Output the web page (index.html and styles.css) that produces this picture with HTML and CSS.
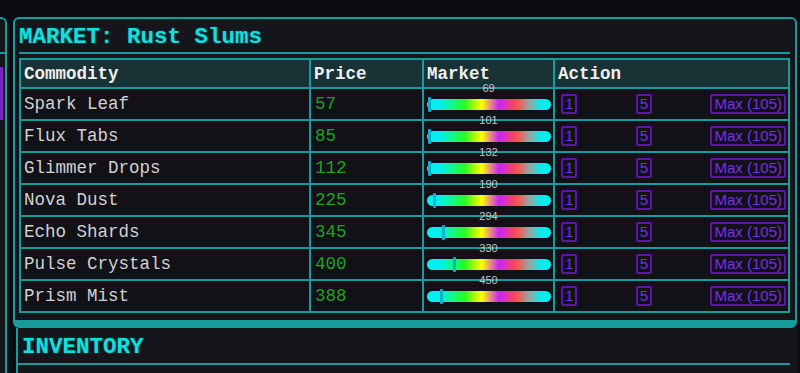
FILE: index.html
```html
<!DOCTYPE html>
<html lang="en">
<head>
  <meta charset="UTF-8" />
  <meta name="viewport" content="width=device-width, initial-scale=1.0" />
  <title>Market: Rust Slums</title>
  <link rel="stylesheet" href="styles.css">
</head>
<body>

  <div class="layout">
    <aside class="sidebar">
      <div class="side-head"></div>
      <div class="side-btn"></div>
    </aside>

    <main class="main">
      <section class="panel market">
        <h2 class="panel-title">MARKET: Rust Slums</h2>

        <table class="market-table">
          <colgroup>
            <col class="c-name">
            <col class="c-price">
            <col class="c-market">
            <col class="c-action">
          </colgroup>
          <thead>
            <tr>
              <th>Commodity</th>
              <th>Price</th>
              <th>Market</th>
              <th>Action</th>
            </tr>
          </thead>
          <tbody>
            <tr>
              <td>Spark Leaf</td>
              <td class="price">57</td>
              <td class="gauge-cell">
                <span class="gauge-val">69</span>
                <div class="gauge"><span class="thumb" style="left:1px"></span></div>
              </td>
              <td class="action-cell">
                <div class="actions"><button class="act">1</button><button class="act">5</button><button class="act">Max (105)</button></div>
              </td>
            </tr>
            <tr>
              <td>Flux Tabs</td>
              <td class="price">85</td>
              <td class="gauge-cell">
                <span class="gauge-val">101</span>
                <div class="gauge"><span class="thumb" style="left:1px"></span></div>
              </td>
              <td class="action-cell">
                <div class="actions"><button class="act">1</button><button class="act">5</button><button class="act">Max (105)</button></div>
              </td>
            </tr>
            <tr>
              <td>Glimmer Drops</td>
              <td class="price">112</td>
              <td class="gauge-cell">
                <span class="gauge-val">132</span>
                <div class="gauge"><span class="thumb" style="left:1px"></span></div>
              </td>
              <td class="action-cell">
                <div class="actions"><button class="act">1</button><button class="act">5</button><button class="act">Max (105)</button></div>
              </td>
            </tr>
            <tr>
              <td>Nova Dust</td>
              <td class="price">225</td>
              <td class="gauge-cell">
                <span class="gauge-val">190</span>
                <div class="gauge"><span class="thumb" style="left:6px"></span></div>
              </td>
              <td class="action-cell">
                <div class="actions"><button class="act">1</button><button class="act">5</button><button class="act">Max (105)</button></div>
              </td>
            </tr>
            <tr>
              <td>Echo Shards</td>
              <td class="price">345</td>
              <td class="gauge-cell">
                <span class="gauge-val">294</span>
                <div class="gauge"><span class="thumb" style="left:15px"></span></div>
              </td>
              <td class="action-cell">
                <div class="actions"><button class="act">1</button><button class="act">5</button><button class="act">Max (105)</button></div>
              </td>
            </tr>
            <tr>
              <td>Pulse Crystals</td>
              <td class="price">400</td>
              <td class="gauge-cell">
                <span class="gauge-val">330</span>
                <div class="gauge"><span class="thumb" style="left:26px"></span></div>
              </td>
              <td class="action-cell">
                <div class="actions"><button class="act">1</button><button class="act">5</button><button class="act">Max (105)</button></div>
              </td>
            </tr>
            <tr>
              <td>Prism Mist</td>
              <td class="price">388</td>
              <td class="gauge-cell">
                <span class="gauge-val">450</span>
                <div class="gauge"><span class="thumb" style="left:13px"></span></div>
              </td>
              <td class="action-cell">
                <div class="actions"><button class="act">1</button><button class="act">5</button><button class="act">Max (105)</button></div>
              </td>
            </tr>
          </tbody>
        </table>
      </section>

      <section class="panel inventory">
        <h2 class="panel-title">INVENTORY</h2>
      </section>
    </main>
  </div>

</body>
</html>
```

FILE: styles.css
```css
body {
  margin: 0;
  height: 373px;
  overflow: hidden;
  background-color: #0c0c10;
  font-family: "Liberation Mono", "Courier New", monospace;
  color: #d2d2d2;
}

.layout {
  display: flex;
  padding-top: 17px;
}

/* left rail, only its edge is in view */
.sidebar {
  flex: none;
  width: 5px;
  border-top: 2px solid #169c9c;
  border-right: 2px solid #169c9c;
  border-top-right-radius: 6px;
  background-color: #15151c;
}

.side-head {
  height: 33px;
  border-bottom: 2px solid #169c9c;
}

.side-btn {
  margin-top: 13px;
  width: 3px;
  height: 53px;
  background-color: #7a22c4;
}

.main {
  flex: 1;
  padding: 0 3px 0 6px;
}

.panel {
  background-color: #15151c;
}

.market {
  border: 2px solid #169c9c;
  border-bottom-width: 8px;
  border-radius: 6px;
  padding: 6px 5px 7px 4px;
}

.panel-title {
  margin: 0;
  padding-bottom: 2px;
  border-bottom: 2px solid #169c9c;
  font-size: 22.5px;
  line-height: 25px;
  font-weight: bold;
  color: #12dede;
  text-shadow: 0 0 2px rgba(0, 230, 230, 0.45);
}

.inventory {
  margin-left: 3px;
  border-left: 2px solid #169c9c;
  padding: 7px 7px 0 0;
  height: 38px;
}

.inventory .panel-title {
  padding-left: 4px;
  padding-bottom: 3px;
}

/* market table */
.market-table {
  width: 771px;
  margin-top: 4px;
  border: 2px solid #169c9c;
  border-collapse: separate;
  border-spacing: 0;
  table-layout: fixed;
  background-color: #111117;
  font-size: 17.5px;
}

.c-name { width: 290px; }
.c-price { width: 113px; }
.c-market { width: 131px; }
.c-action { width: 233px; }

th, td {
  box-sizing: border-box;
  padding: 0 3px;
  text-align: left;
  white-space: nowrap;
  border-right: 2px solid #169c9c;
  border-bottom: 2px solid #169c9c;
}

th:last-child, td:last-child {
  border-right: none;
}

th {
  height: 29px;
  background-color: #193236;
  color: #efefef;
  font-weight: bold;
}

td {
  height: 32px;
}

tbody tr:last-child td {
  height: 30px;
  border-bottom: none;
}

td.price {
  padding-left: 4px;
  color: #1fa31f;
}

/* market gauge */
td.gauge-cell {
  position: relative;
  padding: 0 2px 0 3px;
}

.gauge-val {
  position: absolute;
  top: -6px;
  left: 0;
  right: 0;
  text-align: center;
  font-family: "Liberation Sans", Arial, sans-serif;
  font-size: 11px;
  line-height: 11px;
  color: #c4c4c4;
}

.gauge {
  position: relative;
  height: 11px;
  border-radius: 6px;
  background: linear-gradient(90deg, #00f0f0 0%, #00f0f0 10%, #22ff22 30%, #ffff00 44%, #cc22ff 58%, #ff4a4a 72%, #a0a0a0 82%, #00f0f0 92%, #00f0f0 100%);
}

.thumb {
  position: absolute;
  top: -2px;
  width: 3px;
  height: 15px;
  border-radius: 1px;
  background-color: #06b4c4;
}

/* actions */
td.action-cell {
  padding: 0 2px 0 6px;
}

.actions {
  display: flex;
  justify-content: space-between;
  align-items: center;
}

.act {
  padding: 0 2px;
  border: 2px solid #5f14aa;
  border-radius: 2px;
  background: none;
  color: #7c2ee4;
  font-family: "Liberation Sans", Arial, sans-serif;
  font-size: 15px;
  line-height: 16px;
  cursor: pointer;
}

.act:hover {
  background-color: #1c0f2c;
}
```
